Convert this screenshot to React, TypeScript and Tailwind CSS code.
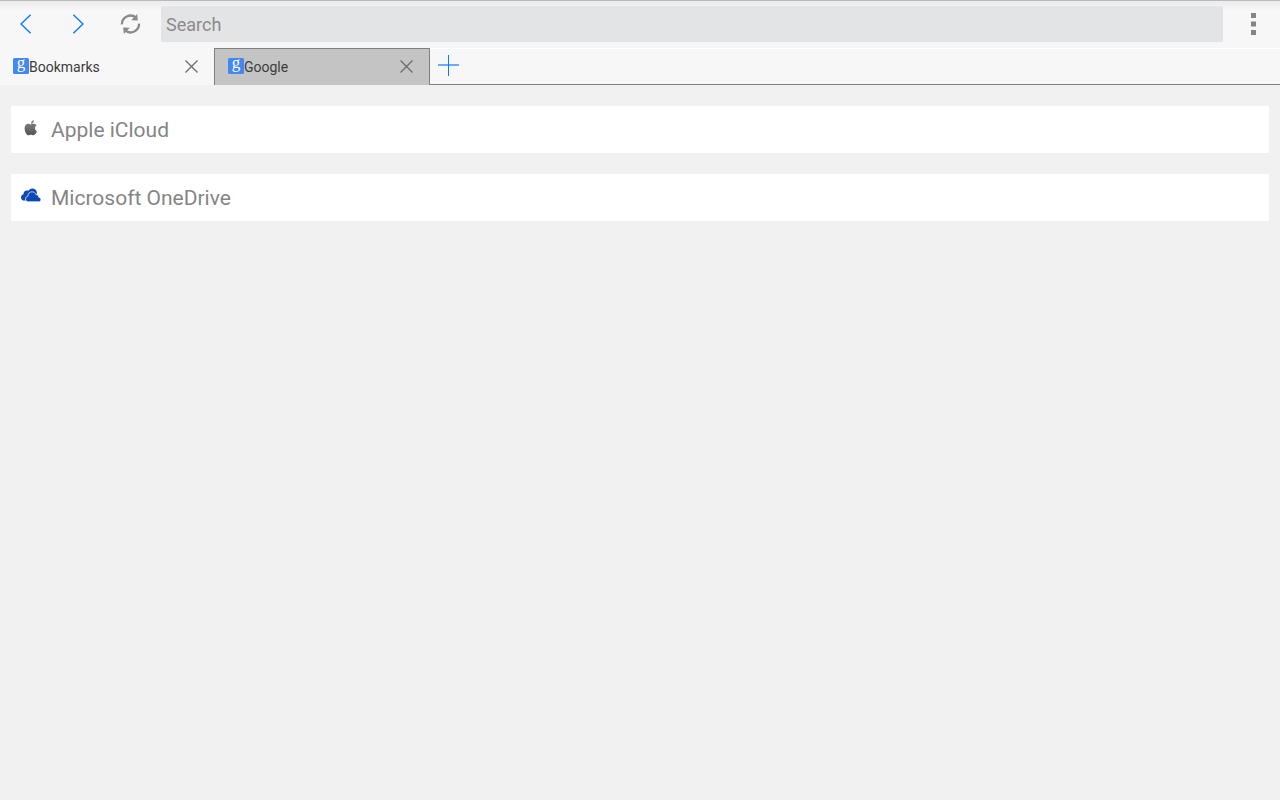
import { useState } from 'react';
import type { ReactNode } from 'react';

function GoogleIcon() {
  return (
    <svg className="size-4 shrink-0 overflow-visible" viewBox="0 0 16 16" aria-hidden="true">
      <rect width="16" height="16" rx="1.5" fill="#4387f4" />
      <text x="8" y="10" textAnchor="middle" fontSize="17" fontFamily="Liberation Serif, serif" fill="#fff">
        g
      </text>
    </svg>
  );
}

function CloseIcon() {
  return (
    <svg className="size-[13px]" viewBox="0 0 13 13" fill="none" stroke="#6b6b6b" strokeWidth="1.3" aria-hidden="true">
      <path d="M0.5 0.5 12.5 12.5M12.5 0.5 0.5 12.5" />
    </svg>
  );
}

function ReloadIcon() {
  return (
    <svg className="h-5 w-[21px]" viewBox="0 0 21 20" aria-hidden="true">
      <g fill="none" stroke="#8a8a8a" strokeWidth="2.3">
        <path d="M1.9 10.4A8.6 8.6 0 0 1 16 3.6" />
        <path d="M19.1 9.6A8.6 8.6 0 0 1 5 16.4" />
      </g>
      <path d="M17.2 0 17.8 6.6 11.2 6.2Z" fill="#8a8a8a" />
      <path d="M3.8 20 3.2 13.4 9.8 13.8Z" fill="#8a8a8a" />
    </svg>
  );
}

function AppleIcon() {
  return (
    <svg className="h-4 w-5" viewBox="0 0 20 16" aria-hidden="true">
      <defs>
        <linearGradient id="apple" x1="0" y1="0" x2="0" y2="1">
          <stop offset="0" stopColor="#858585" />
          <stop offset="1" stopColor="#555" />
        </linearGradient>
      </defs>
      <path
        fill="url(#apple)"
        d="M12.9 0.2C11.2 0.4 9.8 1.8 10 3.7 11.7 3.7 13 2.1 12.9 0.2ZM15.6 5.3C14.6 4 13.3 3.7 12.4 3.7 11.2 3.7 10.5 4.4 9.8 4.4 9 4.4 8.3 3.7 7.2 3.7 5.2 3.7 3.6 5.5 3.6 8.2 3.6 11.7 5.6 15.3 7.5 15.3 8.4 15.3 8.9 14.7 9.9 14.7 11 14.7 11.3 15.3 12.3 15.3 14 15.3 15.4 12.9 15.9 11.3 13.6 10.3 13.3 6.8 15.6 5.3Z"
      />
    </svg>
  );
}

function OneDriveIcon() {
  return (
    <svg className="h-4 w-5" viewBox="0 1 20 16" aria-hidden="true">
      <path
        fill="#0d49b6"
        d="M3.4 13.6C1.3 13.5 0 12.2 0 10.4 0 8.8 1.1 7.6 2.5 7.3 2.4 4.9 4 3.4 5.9 3.4 6.5 3.4 7 3.5 7.4 3.8 8.2 2.3 9.5 1.4 11.3 1.4 13.6 1.4 15.5 3 15.9 5.2L15.5 9 6 13.6Z"
      />
      <path
        fill="#0d49b6"
        stroke="#fff"
        strokeWidth="0.7"
        d="M7.4 14.8C5.6 14.8 4.5 13.7 4.5 12.1 4.5 10.5 5.6 9.4 6.9 9.2 6.9 6.5 8.6 4.8 11 4.8 13 4.8 14.4 6 14.9 7.6 16.7 7.4 17.7 8.6 17.7 10.2 19.1 10.4 19.9 11.3 19.9 12.5 19.9 13.9 18.9 14.8 17.5 14.8Z"
      />
    </svg>
  );
}

function ToolButton({ label, children }: { label: string; children: ReactNode }) {
  return (
    <button type="button" aria-label={label} className="flex h-full w-13 items-center justify-center">
      {children}
    </button>
  );
}

const bookmarks = [
  { name: 'Apple iCloud', href: '#icloud', icon: <AppleIcon /> },
  { name: 'Microsoft OneDrive', href: '#onedrive', icon: <OneDriveIcon /> },
];

const tabs = [
  { name: 'Bookmarks', box: 'w-[214px] bg-[#f7f7f7] pb-px' },
  { name: 'Google', box: 'w-[216px] bg-[#c4c4c4] border-x border-t border-[#808080] pb-0.5' },
];

export default function App() {
  const [query, setQuery] = useState('');
  return (
    <div className="min-h-screen bg-[#f1f1f1] font-['Roboto',sans-serif]">
      <header className="bg-[#f7f7f7]">
        <div className="flex h-12 items-center border-t border-[#bababa] bg-linear-to-b from-[#ebebeb] to-[#f7f7f7] to-20% pb-px">
          <ToolButton label="Back">
            <svg className="h-5 w-3" viewBox="0 0 12 20" fill="none" stroke="#0a78ff" strokeWidth="1.4" aria-hidden="true">
              <path d="M10.6 0.8 1 10 10.6 19.2" />
            </svg>
          </ToolButton>
          <ToolButton label="Forward">
            <svg className="h-5 w-3" viewBox="0 0 12 20" fill="none" stroke="#0a78ff" strokeWidth="1.4" aria-hidden="true">
              <path d="M1.4 0.8 11 10 1.4 19.2" />
            </svg>
          </ToolButton>
          <ToolButton label="Reload">
            <ReloadIcon />
          </ToolButton>
          <input
            type="text"
            aria-label="Search"
            placeholder="Search"
            value={query}
            onChange={(e) => setQuery(e.target.value)}
            className="ml-[5px] h-9 min-w-0 flex-1 rounded-xs bg-[#e3e4e6] px-[5px] pt-px text-lg text-[#333] outline-none placeholder:text-[#8b8b8b]"
          />
          <button type="button" aria-label="Menu" className="flex h-full w-[57px] items-center justify-center pl-1">
            <svg className="h-[22px] w-[5px]" viewBox="0 0 5 22" fill="#858585" aria-hidden="true">
              <path d="M0 0h5v5H0zM0 8.5h5v5H0zM0 17h5v5H0z" />
            </svg>
          </button>
        </div>
        <div className="flex h-[37px]">
          {tabs.map((tab) => (
            <div key={tab.name} className={`flex items-center pr-4 pl-[13px] ${tab.box}`}>
              <button type="button" className="flex flex-1 items-center text-left text-sm text-[#3c3c3c]">
                <GoogleIcon />
                <span className="pt-0.5">{tab.name}</span>
              </button>
              <button type="button" aria-label={`Close ${tab.name}`}>
                <CloseIcon />
              </button>
            </div>
          ))}
          <div className="flex flex-1 border-t border-b border-t-white border-b-[#808080]">
            <button type="button" aria-label="New tab" className="flex w-[38px] items-center justify-center pb-0.5">
              <svg className="size-[22px]" viewBox="0 0 22 22" fill="none" stroke="#0a78ff" aria-hidden="true">
                <path d="M10.5 0v21" />
                <path d="M0 10h21" strokeWidth="1.2" />
              </svg>
            </button>
          </div>
        </div>
      </header>
      <main>
        <ul className="flex flex-col gap-[21px] px-[11px] py-[21px]">
          {bookmarks.map((item) => (
            <li key={item.name}>
              <a
                href={item.href}
                className="flex h-[47px] items-center gap-[10px] bg-white px-[10px] pt-0.5 text-[21px] text-[#858585]"
              >
                <span className="pb-1.5">{item.icon}</span>
                {item.name}
              </a>
            </li>
          ))}
        </ul>
      </main>
    </div>
  );
}
